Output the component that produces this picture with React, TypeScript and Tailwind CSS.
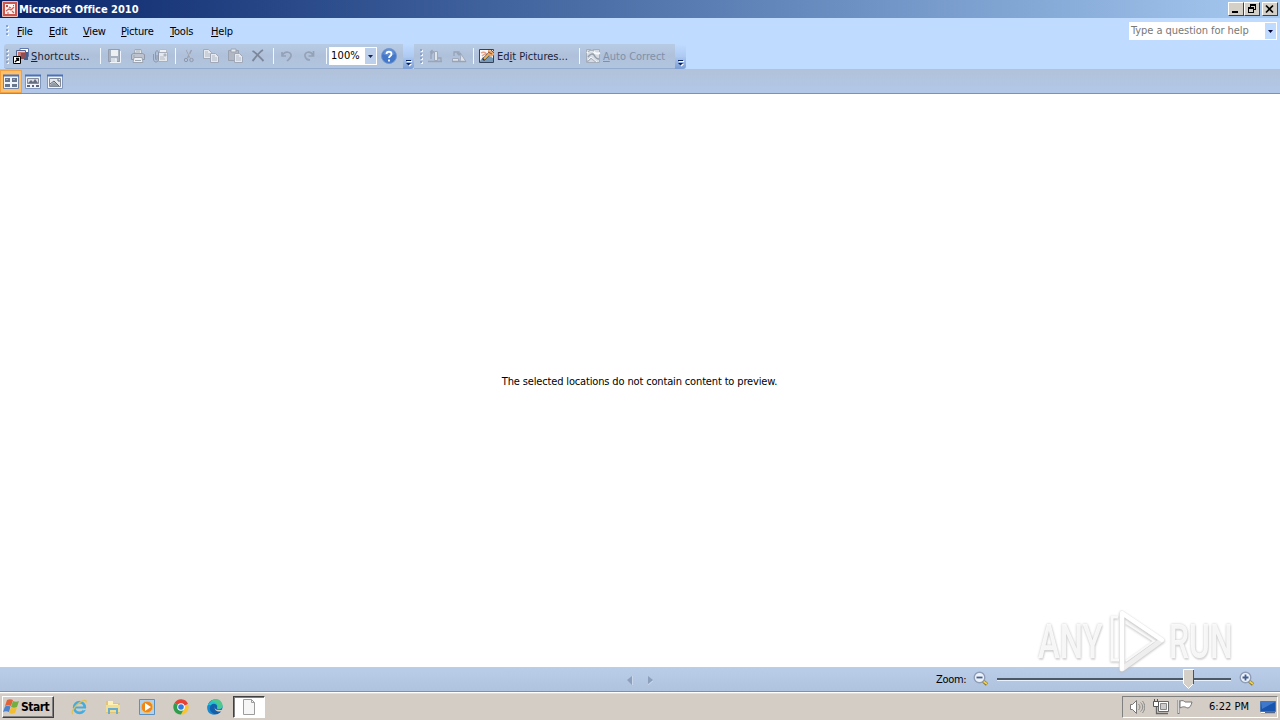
import type { ReactNode } from 'react';

const ui = "font-['DejaVu_Sans_Condensed','DejaVu_Sans',sans-serif]";

function Icon({ children, size = 16, className = '' }: { children: ReactNode; size?: number; className?: string }) {
  return (
    <svg width={size} height={size} viewBox="0 0 16 16" fill="none" className={`block shrink-0 ${className}`}>
      {children}
    </svg>
  );
}

function Slot({ w, children }: { w: string; children?: ReactNode }) {
  return <div className={`flex h-full shrink-0 items-center ${w}`}>{children}</div>;
}

function Grip({ dots = 4 }: { dots?: number }) {
  return (
    <div className="flex flex-col gap-[2px]">
      {Array.from({ length: dots }, (_, i) => (
        <div key={i} className="h-[2px] w-[2px] bg-[#89a5cf] shadow-[1px_1px_0_#f0f6ff]" />
      ))}
    </div>
  );
}

function Separator({ w }: { w: string }) {
  return (
    <Slot w={w}>
      <div className="h-[16px] w-px bg-[#f1f7ff]" />
    </Slot>
  );
}

function Overflow() {
  return (
    <div className="flex h-[25px] w-[11px] shrink-0 items-end justify-center rounded-r-[3px] bg-linear-to-b from-[#bfdbff] via-[#aecaf2] to-[#7b9dd3] pb-[2px]">
      <svg width="7" height="8" viewBox="0 0 7 8">
        <path d="M2 2h5v1H2zM2 5h5L4.500 7.500z" fill="#fff" />
        <path d="M1 1h5v1H1zM1 4h5L3.500 6.500z" fill="#0b205c" />
      </svg>
    </div>
  );
}

/* Title bar */
function TitleBar() {
  const button = 'flex h-[14px] items-center justify-center border border-t-white border-r-[#404040] border-b-[#404040] border-l-white bg-[#d4d0c8]';
  return (
    <div className="flex h-[18px] items-center bg-linear-to-r from-[#0a246a] to-[#a6caf0] pr-[2px] pl-[2px]">
      <Icon>
        <rect width="16" height="16" rx="1" fill="#f0beb8" />
        <rect x="1" y="1" width="14" height="14" fill="#cb574f" />
        <path d="M3 3h10v10H3z" fill="#fff2ef" />
        <path d="M4 4h2v2H4zM11 4h1v1h-1z" fill="#c84b43" />
        <path d="M4 10l3-2 2 1 3-3M7 6l2 1M5 12h2M10 10l2 2" stroke="#cf5d55" strokeWidth="1.200" />
      </Icon>
      <div className="ml-px pt-px text-[11px] leading-[18px] font-bold tracking-[-0.02px] whitespace-nowrap text-white">Microsoft Office 2010</div>
      <div className="ml-auto flex">
        <div className={`${button} w-[16px]`}>
          <svg width="12" height="10" viewBox="0 0 12 10"><path d="M2 7h6v2H2z" /></svg>
        </div>
        <div className={`${button} w-[16px]`}>
          <svg width="12" height="12" viewBox="0 0 12 12" shapeRendering="crispEdges">
            <path d="M4 1h6v2H4zM9 3h1v4H8V6h1zM4 3h1v1H4zM2 4h6v2H2zM2 6h1v4H2zM7 6h1v4H7zM2 9h6v1H2z" />
          </svg>
        </div>
        <div className={`${button} ml-[2px] w-[16px]`}>
          <svg width="10" height="10" viewBox="0 0 10 10"><path d="M1 1.500l7 7M8 1.500l-7 7" stroke="#000" strokeWidth="1.700" /></svg>
        </div>
      </div>
    </div>
  );
}

const menus = [
  { label: 'File', w: 'w-[32px]' },
  { label: 'Edit', w: 'w-[34px]' },
  { label: 'View', w: 'w-[38px]' },
  { label: 'Picture', w: 'w-[49px]' },
  { label: 'Tools', w: 'w-[41px]' },
  { label: 'Help', w: 'w-[40px]' },
];

function MenuBar() {
  return (
    <div className="flex h-[26px] items-center bg-[#bfdbff] pl-[6px] text-[11px]">
      <Slot w="w-[11px]"><div className="mb-[3px]"><Grip dots={3} /></div></Slot>
      {menus.map((menu) => (
        <Slot key={menu.label} w={menu.w}>
          <span className="pt-[2px] tracking-[-0.2px]">
            <span className="underline underline-offset-1">{menu.label[0]}</span>
            {menu.label.slice(1)}
          </span>
        </Slot>
      ))}
      <div className="mr-[3px] ml-auto flex h-[18px] w-[148px] items-center border border-white bg-white">
        <span className="flex-1 pl-px tracking-[-0.05px] whitespace-nowrap text-[#787878]">Type a question for help</span>
        <div className="flex h-full w-[11px] items-center justify-center bg-[#bfdbff]">
          <svg width="5" height="3"><path d="M0 0h5L2.500 3z" fill="#000033" /></svg>
        </div>
      </div>
    </div>
  );
}

function PaperIcon({ x, y }: { x: number; y: number }) {
  return (
    <>
      <path d={`M${x + 0.5} ${y + 0.5}h5l3 3v6h-8z`} fill="#e6eaf0" stroke="#a1a9b8" />
      <path d={`M${x + 2} ${y + 3}h3M${x + 2} ${y + 5}h5M${x + 2} ${y + 7}h5`} stroke="#b0b7c3" />
    </>
  );
}

function EditPicturesIcon() {
  return (
    <Icon>
      <path d="M.5 1.500h14v13H.5z" fill="#f8fafc" stroke="#33415b" />
      <path d="M1 13l3-4 2 1 3-3 5 3v4H1z" fill="#789ab9" />
      <path d="M2 5c3-2 5 0 6 2M3 8c3-3 5-2 7-1" stroke="#e6a28b" strokeWidth="1.500" />
      <path d="M4 12l7-7" stroke="#2e3442" strokeWidth="3" />
      <path d="M5 11l7-7" stroke="#f2b64f" strokeWidth="2" />
      <path d="M9 2l6 1v4l-3 2-3-3z" fill="#e9a56a" />
      <path d="M9 4l4 2M12 2l3 3" stroke="#8b5034" />
    </Icon>
  );
}

function AutoCorrectIcon() {
  return (
    <Icon>
      <path d="M1.500 1.500h13v13h-13z" fill="#d5dbe3" stroke="#a4adbb" />
      <path d="M2 5c3-3 6-3 7-1s3 2 6 1" stroke="#f8f9fa" strokeWidth="2" />
      <path d="M3 9c2-3 5-4 6-2s2 4 5 4" stroke="#939dac" strokeWidth="1.500" />
      <path d="M2 14l4-4 5 4M3 4c2-2 4-2 6-1" stroke="#aab2be" strokeWidth="1.500" />
      <path d="M3 12l3-3 6 5" stroke="#f5f7f9" />
    </Icon>
  );
}

function ToolBar() {
  return (
    <div className="flex h-[25px] bg-[#bfdbff] pl-[4px] text-[11px]">
      <div className="flex h-full w-[399px] items-center rounded-l-[3px] border-b border-[#94abd0] bg-linear-to-b from-[#b8cbe5] via-[#afc1da] to-[#b2c5e0]">
        <Slot w="w-[9px]"><div className="ml-[2px]"><Grip /></div></Slot>
        <Slot w="w-[18px]">
          <Icon>
            <path d="M7 .5h8.500v8H7z" fill="#fff" stroke="#6079ab" />
            <path d="M3.500 2.500h9v8h-9z" fill="#d5dae8" stroke="#53658e" />
            <path d="M5 4h7v5H5z" fill="#c7776f" />
            <path d="M8 5h5v6H8z" fill="#914d54" />
            <path d="M14 4v7h-3" stroke="#4b5d87" strokeWidth="2" />
            <path d="M.5 8.500h7v7h-7z" fill="#fff" stroke="#000" />
            <path d="M2 14l3-3M3 10.500h2.500V13" stroke="#000" strokeWidth="1.300" />
          </Icon>
        </Slot>
        <Slot w="w-[69px]">
          <span className="pt-[2px] tracking-[0.16px] text-[#17233d]"><span className="underline underline-offset-1">S</span>hortcuts...</span>
        </Slot>
        <Separator w="w-[6px]" />
        <Slot w="w-[24px]">
          <Icon>
            <path d="M2.500 1.500h11v12h-11z" fill="#a8b1bf" stroke="#949dad" />
            <path d="M5 2h7v6H5z" fill="#edf0f3" />
            <path d="M5 10h6v4H5z" fill="#d6dce4" />
            <path d="M9 11h1v3M14.500 3v11.500H4" stroke="#eff4fa" />
          </Icon>
        </Slot>
        <Slot w="w-[22px]">
          <Icon>
            <path d="M5 1.500h6l1 5H4z" fill="#e8ebef" stroke="#a1a9b6" />
            <path d="M1.500 6.500l2-1h9l2 1v5h-13z" fill="#bdc4cf" stroke="#9099a8" />
            <path d="M4 9.500h8l1 5H3z" fill="#eff1f4" stroke="#9da5b2" />
            <path d="M6 3h4M5 5h5M5 12.500h6M3 8h2" stroke="#a0a8b4" />
          </Icon>
        </Slot>
        <Slot w="w-[23px]">
          <Icon>
            <path d="M7.500 1.500h7v7h-7z" fill="#eef0f3" stroke="#b5bcc7" />
            <path d="M6.500 4.500h9v9h-9z" fill="#e4e8ed" stroke="#a7afbc" />
            <path d="M12 6h2v2h-2zM8 9h4M8 11h5" fill="#9ca5b3" stroke="#b2b9c4" />
            <path d="M1.500 6v5c0 4 5 4 5 0V5c0-3-3-3-3 0v6c0 1 1.500 1 1.500 0V7" stroke="#8e98a8" />
          </Icon>
        </Slot>
        <Separator w="w-[6px]" />
        <Slot w="w-[22px]">
          <Icon>
            <path d="M5.500 2l4 8M10.500 2l-4 8" stroke="#98a1b1" strokeWidth="1.500" />
            <path d="M6 2l4 8" stroke="#dce3ec" strokeWidth=".5" />
            <circle cx="5" cy="12" r="1.700" stroke="#8e98aa" /><circle cx="10.500" cy="12" r="1.700" stroke="#8e98aa" />
          </Icon>
        </Slot>
        <Slot w="w-[24px]"><Icon><PaperIcon x={0} y={1} /><PaperIcon x={7} y={5} /></Icon></Slot>
        <Slot w="w-[23px]">
          <Icon>
            <path d="M1.500 2.500h10v10h-10z" fill="#b1b8c4" stroke="#98a1af" />
            <path d="M4 1h5v3H4z" fill="#e8ebef" stroke="#9ba4b2" /><PaperIcon x={7} y={5} />
          </Icon>
        </Slot>
        <Slot w="w-[23px]"><Icon><path d="M2.500 3c4 2 7 6 11 10M13 2C9 4 6 9 2.500 13" stroke="#7c879b" strokeWidth="1.900" /></Icon></Slot>
        <Separator w="w-[6px]" />
        <Slot w="w-[23px]"><Icon><path d="M3 4v4h4M3 8c3-6 10-4 9 0-.4 2-2 3-4 5" stroke="#95a1b5" strokeWidth="1.700" /></Icon></Slot>
        <Slot w="w-[24px]"><Icon className="-ml-px"><path d="M12.500 3v5h-5M12 8C10 2 3 4 4 8c.4 2 2 4 5 4" stroke="#95a1b5" strokeWidth="1.700" /></Icon></Slot>
        <Separator w="w-[3px]" />
        <div className="flex h-[18px] w-[48px] shrink-0 items-center border border-white bg-white">
          <span className="flex-1 pl-px tracking-[0.15px]">100%</span>
          <div className="flex h-full w-[11px] items-center justify-center bg-[#bcd0ec]">
            <svg width="5" height="3"><path d="M0 0h5L2.500 3z" fill="#15224b" /></svg>
          </div>
        </div>
        <Slot w="ml-[4px] w-[18px]">
          <Icon>
            <circle cx="8" cy="8" r="7.500" fill="#4377c9" stroke="#7297d0" />
            <path d="M2 6c2-7 10-7 12 0-3 2-9 2-12 0z" fill="#80a8e3" opacity=".5" />
            <path d="M5.500 6c0-3 5-3 5 0 0 2-2.500 2-2.500 4M8 11.500v2" stroke="#fff" strokeWidth="1.800" />
          </Icon>
        </Slot>
      </div>
      <Overflow />
      <div className="flex h-full w-[261px] items-center border-b border-[#94abd0] bg-linear-to-b from-[#b8cbe5] via-[#afc1da] to-[#b2c5e0]">
        <Slot w="w-[13px]"><div className="ml-[6px]"><Grip /></div></Slot>
        <Slot w="w-[24px]">
          <Icon>
            <path d="M7.500 3.500h3v9h-3z" fill="#e1e6ed" stroke="#a1aaba" />
            <path d="M1 13.500h14M11 10h3v3" stroke="#9ba5b5" strokeWidth="1.300" />
            <path d="M4 11V4h3M5.500 2L3.500 4l2 2" stroke="#98a3b5" strokeWidth="1.300" />
          </Icon>
        </Slot>
        <Slot w="w-[22px]">
          <Icon>
            <path d="M1.500 10.500h6v3h-6zM10 6l5 7.500H9z" fill="#dde2e9" stroke="#a0aaba" />
            <path d="M3 8V4h5v3M6 5l2 2 2-2M1 13.500h14" stroke="#98a3b5" strokeWidth="1.300" />
          </Icon>
        </Slot>
        <Separator w="w-[6px]" />
        <Slot w="w-[18px]"><EditPicturesIcon /></Slot>
        <Slot w="w-[82px]"><span className="pt-[2px] text-[#17233d]">Ed<span className="underline underline-offset-1">i</span>t Pictures...</span></Slot>
        <Separator w="w-[6px]" />
        <Slot w="w-[18px]"><AutoCorrectIcon /></Slot>
        <Slot w="w-[72px]"><span className="pt-[2px] text-[#8190a8]"><span className="underline underline-offset-1">A</span>uto Correct</span></Slot>
      </div>
      <Overflow />
    </div>
  );
}

function ViewBar() {
  return (
    <div className="flex h-[25px] items-center border-b border-[#7892bd] bg-linear-to-b from-[#b1c2d9] to-[#b2c8e9]">
      <div className="flex h-[23px] w-[22px] items-center justify-center border border-[#f3a040] bg-[#ffc06b] pt-px">
        <Icon>
          <path d="M.5 1.500h15v13H.5z" fill="#eff3fa" stroke="#7184a8" /><path d="M0 1.500h16" stroke="#4b71b8" strokeWidth="2" />
          <path d="M2 4h5v4H2zM9 4h5v4H9zM2 10h5v3H2zM9 10h5v3H9z" fill="#69758c" />
          <path d="M3 5h2v1H3zM10 5h2v1h-2z" fill="#a5aebb" />
        </Icon>
      </div>
      <div className="ml-[3px] flex gap-[6px] pt-px">
        <Icon>
          <path d="M.5 1.500h15v13H.5z" fill="#f2f6fc" stroke="#8196bb" /><path d="M0 1.500h16" stroke="#4b71b8" strokeWidth="2" />
          <path d="M2.500 4.500h11v5h-11z" fill="#d9e0e8" stroke="#838b96" /><path d="M3 9l3-3 2 2 2-3 3 4z" fill="#626e7e" />
          <path d="M2 11h3v2H2zM7 11h2v2H7zM11 11h3v2h-3z" fill="#59677f" />
        </Icon>
        <Icon>
          <path d="M.5 1.500h15v13H.5z" fill="#f2f6fc" stroke="#8196bb" /><path d="M0 1.500h16" stroke="#4b71b8" strokeWidth="2" />
          <path d="M2.500 4.500h11v8h-11z" fill="#e5e9ee" stroke="#838b96" />
          <path d="M3 11l4-3 5 4H3z" fill="#929ba5" /><path d="M3 10l4-3 5 5M10 6h2v2" stroke="#596782" />
        </Icon>
      </div>
    </div>
  );
}

function Magnifier({ plus = false }: { plus?: boolean }) {
  return (
    <Icon className="-mt-px">
      <path d="M9.500 9.500l4.500 4" stroke="#817439" strokeWidth="3.500" /><path d="M10 10l4 3" stroke="#f1d34c" strokeWidth="1.800" />
      <circle cx="6.500" cy="6.500" r="5.300" fill="#edf3fb" stroke="#8f9db8" strokeWidth="1.400" />
      <path d={plus ? 'M3.500 6.500h6M6.500 3.500v6' : 'M3.500 6.500h6'} stroke="#445f91" strokeWidth="1.800" />
    </Icon>
  );
}

function StatusBar() {
  return (
    <div className="flex h-[25px] items-center border-t border-b border-t-[#bdcde5] border-b-[#7892bd] bg-linear-to-b from-[#b9cce8] to-[#afc3df] text-[11px]">
      <svg className="ml-[625px] shrink-0" width="29" height="12" viewBox="0 0 29 12">
        <path d="M2 6l5-4v9z" fill="#8c9fbd" /><path d="M23 2l5 4-5 4z" fill="#8c9fbd" />
        <path d="M7.500 2v9M23 11l5-4" stroke="#c9d7eb" />
      </svg>
      <span className="ml-[282px] w-[37px] pt-px tracking-[-0.3px]">Zoom:</span>
      <Magnifier />
      <div className="relative ml-[8px] h-full w-[234px]">
        <div className="mt-[10px] box-content h-[2px] border-b border-[#e9f1fc] bg-[#4c5969]" />
        <svg className="absolute top-[1px] left-[186px]" width="12" height="21" viewBox="0 0 12 21">
          <path d="M.5.500h10v14l-5 5-5-5z" fill="#d4d0c8" stroke="#fff" />
          <path d="M10.500 1v14" fill="none" stroke="#4f5258" />
        </svg>
      </div>
      <div className="ml-[8px]"><Magnifier plus /></div>
    </div>
  );
}

function BrowserIcons() {
  return (
    <div className="flex h-full items-center gap-[18px]">
      <Icon>
        <circle cx="8.500" cy="8.500" r="5.300" stroke="#45ace0" strokeWidth="2.800" />
        <path d="M4 8.500h10" stroke="#45ace0" strokeWidth="2" /><path d="M12 9.500v2l4-1v-1z" fill="#d4cdc5" />
        <path d="M2 15C-.5 14 3 8 8 4c4-3 8-4 7-.5" stroke="#e4c24d" strokeWidth="1.300" />
      </Icon>
      <Icon>
        <path d="M1 2h6l1 2h7v10H1z" fill="#dec47c" /><path d="M3 2h5v3h5v6H3z" fill="#fff1b3" />
        <path d="M1 6h14v7H1z" fill="#f0de97" /><path d="M3 15V9h10v6h-2v-4H5v4z" fill="#68acd0" />
      </Icon>
      <Icon>
        <path d="M.5.500h15v15H.5z" fill="#b2d1ee" stroke="#5b91c1" /><circle cx="8" cy="8" r="5.800" fill="#ee861a" stroke="#f8ba55" />
        <path d="M6 4v8l6-4z" fill="#fff" />
      </Icon>
      <Icon>
        <path d="M8 8L1.500 4A7.500 7.500 0 0 1 15 5z" fill="#e64236" /><path d="M15 5a7.500 7.500 0 0 1-7 10.500L11 9z" fill="#f8c52e" />
        <path d="M1.500 4a7.500 7.500 0 0 0 6.500 11.500l3-6z" fill="#329c4d" /><circle cx="8" cy="8" r="3.800" fill="#fff" /><circle cx="8" cy="8" r="2.800" fill="#327be0" />
      </Icon>
      <Icon>
        <circle cx="8" cy="8" r="7.500" fill="#1260ac" /><path d="M.5 8C1-.5 14-2 15.500 7c.5 3-3 4-5.500 3 2-4-3-7-6-4z" fill="#27bfd0" />
        <path d="M7 0c6-1 10 5 8 8-1 2-4 2-5 1 2-4-2-7-7-6z" fill="#4dc98d" /><path d="M4 6c-3 4 0 8 4 9.500C1 16-1 10 1 6z" fill="#178bd1" />
        <path d="M8 7.500c-1 3 2 4.500 7.500 3v1.500c-4 1.500-9 0-7.500-4.500z" fill="#d4cdc5" />
      </Icon>
    </div>
  );
}

function Taskbar() {
  return (
    <div className="flex h-[28px] items-center border-t border-white bg-[#d4cdc5] text-[11px] shadow-[inset_0_1px_0_#e1ded8]">
      <div className="ml-[2px] flex h-[22px] w-[52px] items-center border border-t-white border-r-[#404040] border-b-[#404040] border-l-white bg-[#d4cdc5] shadow-[inset_-1px_-1px_0_#808080]">
        <Icon>
          <path d="M4 1c2-1 4-1 6 0L8 7C6 6 4 6 2 7z" fill="#df6238" /><path d="M10 2c2 1 4 1 6 0l-2 6c-2 1-4 1-6 0z" fill="#75ad42" />
          <path d="M2 7.500c2-1 4-1 5.500 0L6 13c-2-1-4-1-6 0z" fill="#4c83cc" /><path d="M8 8.500c2 1 4 1 6 0L12 14c-2 1-4 1-6 0z" fill="#f1bd32" />
        </Icon>
        <span className="ml-[2px] pt-px text-[12px] font-bold tracking-[-0.5px]">Start</span>
      </div>
      <div className="ml-[17px] h-full"><BrowserIcons /></div>
      <div className="ml-[10px] flex h-[22px] w-[32px] items-center justify-center border border-t-[#404040] border-r-white border-b-white border-l-[#404040] bg-white shadow-[inset_1px_1px_0_#808080]">
        <Icon><path d="M2.500.500h8l3 3v12h-11z" fill="#f6f6f6" stroke="#9c9c9c" /><path d="M10.500.500v3h3" stroke="#9c9c9c" /></Icon>
      </div>
      <div className="mr-[2px] ml-auto flex h-[22px] w-[156px] items-center border border-t-[#808080] border-r-white border-b-white border-l-[#808080] pl-[6px]">
        <Icon>
          <path d="M1.500 5.500h2l4-4v13l-4-4h-2z" fill="#fff" stroke="#777" />
          <path d="M9.500 5c2 2 2 4 0 6M11.500 3.500c3 3 3 6 0 9M13.500 2c3 4 3 8 0 12" stroke="#888" />
        </Icon>
        <Icon className="ml-[8px]">
          <path d="M5.500 2.500h10v10h-10z" fill="#fff" stroke="#666" /><path d="M7.500 4.500h6v6h-6z" fill="#ccc" stroke="#888" />
          <path d="M6 14.500h9M3.500 8v6.500H8" stroke="#666" strokeWidth="1.300" />
          <path d="M.5 2.500h5v5h-5zM1.500 2.500V0M4.500 2.500V0" fill="#fff" stroke="#555" />
        </Icon>
        <Icon className="ml-[8px]">
          <path d="M1.500 1v14" stroke="#777" strokeWidth="2" /><path d="M1.500 1v13" stroke="#fff" strokeWidth=".7" />
          <path d="M3 2c3-1 4 0 5 1h7c-1 4-2 6-5 6-1-1-4-2-7 0z" fill="#fff" stroke="#777" />
        </Icon>
        <span className="ml-[16px] w-[51px] pt-[2px] tracking-[0.03px] whitespace-nowrap">6:22 PM</span>
        <Icon>
          <path d="M.5 2.500h15v10H.5z" fill="#1755af" stroke="#4c76ae" /><path d="M1 3h14L2 10z" fill="#4079cc" />
          <path d="M1 13.500h14" stroke="#53678a" strokeWidth="1.500" /><path d="M1 13.500h4" stroke="#fff" />
        </Icon>
      </div>
    </div>
  );
}

/* Translucent mark over the lower right corner of the preview */
function Watermark() {
  const word = "font-['Roboto',sans-serif] text-[49px] leading-none font-medium text-white/85 origin-left [text-shadow:0_0_3px_#c2c2c2,1px_2px_2px_#dedede]";
  return (
    <div className="absolute top-[606px] left-[1038px] flex h-[70px] w-[197px] items-center">
      <div className="w-[69px]"><div className={`${word} scale-x-[0.67]`}>ANY</div></div>
      <svg className="shrink-0 drop-shadow-[0_1px_1px_#bdbdbd]" width="60" height="66" viewBox="0 0 60 66" fill="none">
        <path d="M15 5v56l40-29z" stroke="#eeeeee" strokeWidth="5" strokeLinejoin="round" />
        <path d="M15 61V5l40 27" stroke="#fff" strokeWidth="4" strokeLinecap="round" strokeLinejoin="round" />
        <path d="M11 9H5v43h7" stroke="#fafafa" strokeWidth="3" />
        <path d="M19 15l28 18-28 20" stroke="#f8f8f8" strokeWidth="2" />
      </svg>
      <div className="ml-[2px] w-[65px]"><div className={`${word} scale-x-[0.65]`}>RUN</div></div>
    </div>
  );
}

export default function App() {
  return (
    <div className={`relative flex h-[720px] w-[1280px] flex-col overflow-hidden bg-white text-black ${ui}`}>
      <TitleBar />
      <MenuBar />
      <ToolBar />
      <ViewBar />
      <main className="flex flex-1 items-center justify-center pt-[3px] pr-px text-[11px]">
        <p className="tracking-[-0.15px] whitespace-nowrap">The selected locations do not contain content to preview.</p>
      </main>
      <StatusBar />
      <Taskbar />
      <Watermark />
    </div>
  );
}
